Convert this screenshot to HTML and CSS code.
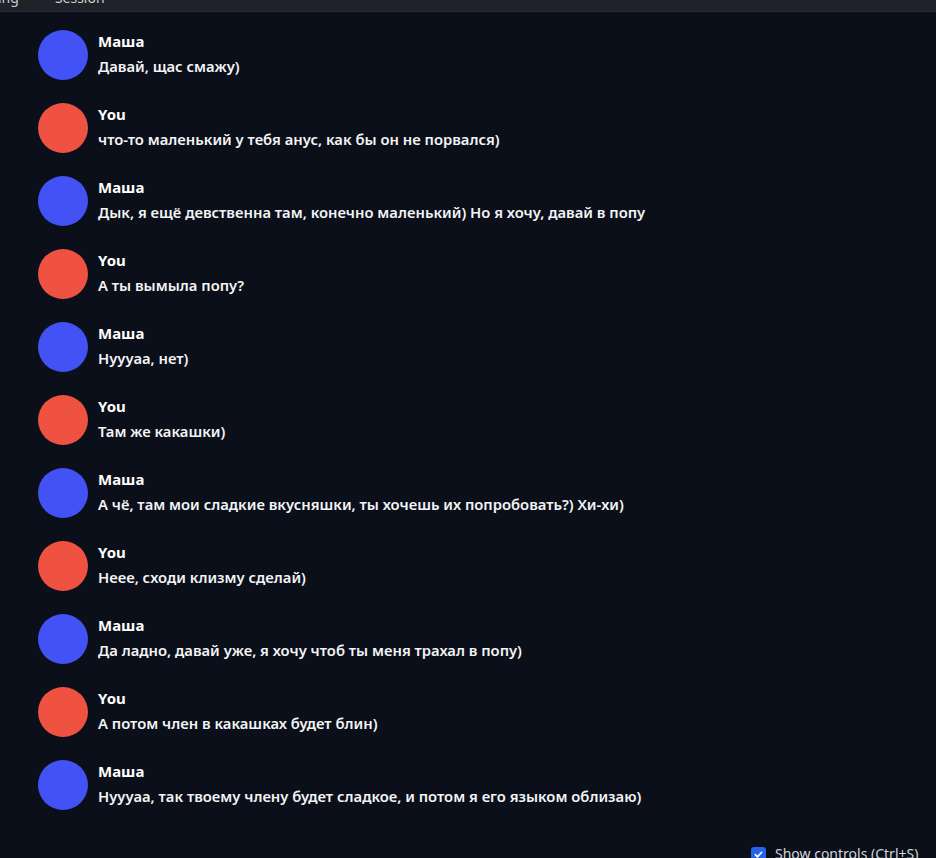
FILE: index.html
```html
<!doctype html>
<html>
<head>
<meta charset="utf-8">
<title>Chat</title>
<link rel="stylesheet" href="styles.css">
</head>
<body>
<div class="tabs">
    <span class="tab first">ing</span>
    <span class="tab">Session</span>
</div>
<div class="chat">
    <div class="msg"><div class="av bot"></div><div class="txt"><p class="name">Маша</p><p class="body">Давай, щас смажу)</p></div></div>
    <div class="msg"><div class="av you"></div><div class="txt"><p class="name">You</p><p class="body">что-то маленький у тебя анус, как бы он не порвался)</p></div></div>
    <div class="msg"><div class="av bot"></div><div class="txt"><p class="name">Маша</p><p class="body">Дык, я ещё девственна там, конечно маленький) Но я хочу, давай в попу</p></div></div>
    <div class="msg"><div class="av you"></div><div class="txt"><p class="name">You</p><p class="body">А ты вымыла попу?</p></div></div>
    <div class="msg"><div class="av bot"></div><div class="txt"><p class="name">Маша</p><p class="body">Нуууаа, нет)</p></div></div>
    <div class="msg"><div class="av you"></div><div class="txt"><p class="name">You</p><p class="body">Там же какашки)</p></div></div>
    <div class="msg"><div class="av bot"></div><div class="txt"><p class="name">Маша</p><p class="body">А чё, там мои сладкие вкусняшки, ты хочешь их попробовать?) Хи-хи)</p></div></div>
    <div class="msg"><div class="av you"></div><div class="txt"><p class="name">You</p><p class="body">Неее, сходи клизму сделай)</p></div></div>
    <div class="msg"><div class="av bot"></div><div class="txt"><p class="name">Маша</p><p class="body">Да ладно, давай уже, я хочу чтоб ты меня трахал в попу)</p></div></div>
    <div class="msg"><div class="av you"></div><div class="txt"><p class="name">You</p><p class="body">А потом член в какашках будет блин)</p></div></div>
    <div class="msg"><div class="av bot"></div><div class="txt"><p class="name">Маша</p><p class="body">Нуууаа, так твоему члену будет сладкое, и потом я его языком облизаю)</p></div></div>
</div>
<div class="controls">
    <label class="check"><span class="box"><svg width="11" height="11" viewBox="0 0 12 12"><path d="M2.5 6.2l2.4 2.4 4.6-5" fill="none" stroke="#fff" stroke-width="1.8" stroke-linecap="round" stroke-linejoin="round"/></svg></span>Show controls (Ctrl+S)</label>
</div>
</body>
</html>
```

FILE: styles.css
```css
* { padding: 0; margin: 0; box-sizing: border-box; }
html, body { height: 100%; }
body { background: #0b0f19; font-family: "Noto Sans", "Open Sans", sans-serif; color: #f3f4f6; overflow: hidden; }

.tabs { height: 12px; background: #1f2229; border-bottom: 1px solid #2a2d35; display: flex; overflow: hidden; }
.tabs .tab { font-size: 14px; line-height: 14px; color: #c9cbd1; margin-top: -9px; }
.tabs .first { margin-left: -2px; margin-right: 36px; }

.chat { padding: 18px 0 0 38px; }
.msg { display: flex; height: 73px; }
.av { width: 50px; height: 50px; border-radius: 50%; flex-shrink: 0; margin-right: 10px; }
.av.bot { background: #4352f5; }
.av.you { background: #ef5241; }
.txt { padding-top: 1px; }
.name { font-size: 15px; font-weight: 700; line-height: 20px; color: #fff; }
.body { font-size: 14.8px; font-weight: 600; line-height: 20px; margin-top: 5px; color: #f3f4f6; }

.controls { position: absolute; left: 751px; top: 845px; }
.check { display: flex; align-items: center; font-size: 14px; color: #d1d5db; line-height: 18px; }
.check .box { width: 15px; height: 15px; border-radius: 3px; background: #2563eb; display: flex; align-items: center; justify-content: center; margin-right: 9px; }
```
